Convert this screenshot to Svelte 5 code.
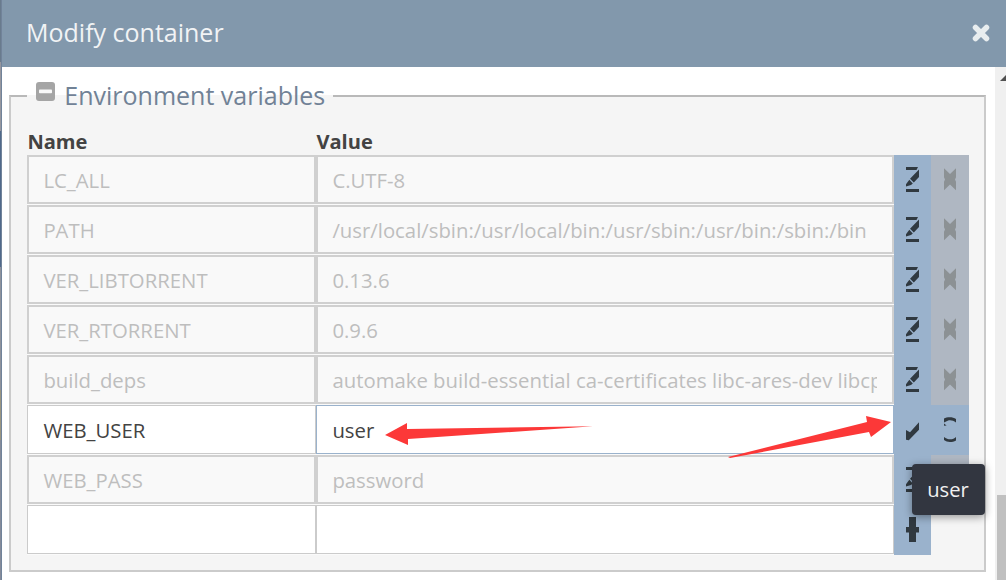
<script>
  const rows = [
    { name: 'LC_ALL', value: 'C.UTF-8' },
    { name: 'PATH', value: '/usr/local/sbin:/usr/local/bin:/usr/sbin:/usr/bin:/sbin:/bin' },
    { name: 'VER_LIBTORRENT', value: '0.13.6' },
    { name: 'VER_RTORRENT', value: '0.9.6' },
    { name: 'build_deps', value: 'automake build-essential ca-certificates libc-ares-dev libcppunit-dev' },
    { name: 'WEB_USER', value: 'user', state: 'editing' },
    { name: 'WEB_PASS', value: 'password' },
    { name: '', value: '', state: 'blank' }
  ];
</script>

{#snippet icon(kind)}
  <svg class="icon" viewBox="0 0 13 25" width="13" height="25">
    {#if kind === 'edit'}
      <path d="M0 0H12L10.5 3H0ZM0 22H13V25H0Z" />
      <path d="M13 2.5V10L7.8 15.6L4 11.8ZM3.3 12.8L6.8 16.4L5 18L0 19.5V17.2Z" />
    {:else if kind === 'remove'}
      <path d="M0 1.2L6 7L12 1.2V10.2L11 12.5L12 14.8V23.2L6 17.4L0 23.2V14.8L1 12.5L0 10.2Z" />
    {:else if kind === 'save'}
      <path d="M0 13L4 15.2L13 5.3V12.7L2.8 23.3L0 22.8Z" />
    {:else if kind === 'undo'}
      <path d="M0 1.6C3-.4 9-.4 12 2V5.6C8.5 2.7 4.5 2.5 1.6 4.8L0 5.6ZM0 6.5L2.6 8.6L0 8.8ZM0 20C4 23.1 9 23 12 20V23.4C8 25.6 3 25.5 0 23Z" />
    {:else}
      <path d="M3 0H10V10H13V15.5H10V25H3V15.5H0V10H3Z" />
    {/if}
  </svg>
{/snippet}

<div class="screen">
  <div class="backdrop"></div>
  <section class="dialog">
    <header>
      <h1>Modify container</h1>
      <svg class="close" viewBox="0 0 18 18" width="18" height="18"><path d="M3.5 3.5L14.5 14.5M14.5 3.5L3.5 14.5" /></svg>
    </header>
    <div class="body">
      <main>
        <div class="group">
          <div class="legend">
            <svg viewBox="0 0 19 19" width="19" height="19"><rect width="19" height="19" rx="3" fill="#a5a5a5" /><rect x="3" y="7.5" width="13" height="3.8" rx=".8" fill="#f8f8f8" /></svg>
            <span>Environment variables</span>
          </div>
          <div class="grid heads"><b>Name</b><b>Value</b></div>
          {#each rows as row}
            <div class="grid row {row.state ?? 'locked'}">
              <div class="cell"><span>{row.name}</span></div>
              <div class="cell value"><span>{row.value}</span></div>
              <div class="button">{@render icon(row.state === 'editing' ? 'save' : row.state === 'blank' ? 'add' : 'edit')}</div>
              {#if row.state !== 'blank'}
                <div class="button second">{@render icon(row.state === 'editing' ? 'undo' : 'remove')}</div>
              {/if}
            </div>
          {/each}
        </div>
      </main>
      <aside>
        <svg width="11" height="14" viewBox="0 0 11 14"><path d="M5 14L11 8V14Z" fill="#505050" /></svg>
        <div class="thumb"></div>
      </aside>
    </div>
  </section>
  <svg class="marks" width="1006" height="580" viewBox="0 0 1006 580">
    <path d="M385 435L407 423V429L593 426.3L408 439V445Z" />
    <path d="M728 457L867 422L866 416L891 422L871 437L869 432L730 458Z" />
  </svg>
  <div class="tip">user</div>
</div>

<style>
  .screen { position: relative; display: flex; width: 1006px; height: 580px; overflow: hidden; font-family: "Open Sans", sans-serif; color: #434343; background: #fff; }
  .backdrop { flex: 0 0 2px; background: linear-gradient(#697b8d 0 62px, #96979f 62px 131px, #50698a 131px 267px, #8e929c 267px 390px, #9a9580 390px 440px, #858b9a 440px); border-right: 1px solid #71839a; box-sizing: border-box; }
  .dialog { flex: 1; display: flex; flex-direction: column; min-width: 0; }
  header { height: 67px; flex: none; box-sizing: border-box; padding: 0 17px 0 24px; display: flex; align-items: center; justify-content: space-between; background: #8298ac; }
  h1 { margin: 0; font-size: 25px; font-weight: 400; line-height: 65px; height: 67px; color: #f1f3f5; }
  .close { stroke: #e8edef; stroke-width: 5.5; stroke-linecap: round; margin: -2px -1px 0 0; }
  .body { flex: 1; display: flex; }
  main { flex: 1; padding: 28px 9px 0 7px; }
  .group { height: 477px; box-sizing: border-box; border: 2px solid #cbcbcb; border-top-color: #b9b9b9; background: #f5f5f5; padding: 0 15px 0 16px; }
  .legend { display: flex; width: 306px; height: 34px; margin-top: -17px; box-sizing: border-box; padding-left: 9.3px; gap: 9px; font-size: 25px; line-height: 30px; color: #718296; background: linear-gradient(#fff 15px, #f5f5f5 15px); white-space: nowrap; }
  .legend svg { margin-top: 2px; flex: none; }
  .grid { display: grid; grid-template-columns: 289px 578px 37px 38px; }
  .heads { height: 41px; font-size: 20.1px; line-height: 27px; padding-top: 14px; box-sizing: border-box; }
  .heads b { font-weight: 700; padding-left: .4px; }
  .row { height: 50px; width: 867px; background: #fafafa; }
  .cell { height: 49px; box-sizing: border-box; border: 1px solid #cbcbcb; padding: 0 15.6px 0 15.4px; background: #fff; font-size: 20.33px; line-height: 49px; display: flex; }
  .cell span { overflow: hidden; white-space: nowrap; flex: 1; }
  .locked .cell { border-width: 2px; border-color: #d0d0d0; padding: 0 14.6px 0 14.4px; background: #f9f9f9; color: #bebebe; }
  .locked .cell span { margin-top: -1px; }
  .editing .value { border-color: #9ab2cc; }
  .button { background: #9ab2cc; height: 50px; padding: 12px 0 0 12px; box-sizing: border-box; fill: #303940; }
  .second { padding-left: 13px; }
  .locked .second { background: #afb7c2; fill: #8c9194; }
  .icon { display: block; }
  aside { width: 11px; background: #f0f0f0; display: flex; flex-direction: column; }
  .thumb { margin: 414px 0 0 2px; flex: 1; background: #c0c0c0; }
  .marks { position: absolute; inset: 0; fill: #fc3838; }
  .tip { position: absolute; left: 912px; top: 464px; width: 73px; height: 51px; box-sizing: border-box; padding-right: 1px; text-align: center; border-radius: 4px; background: #323640; color: #f1f1f1; font-size: 20.2px; line-height: 51px; box-shadow: 0 2px 8px #0006; }
</style>
